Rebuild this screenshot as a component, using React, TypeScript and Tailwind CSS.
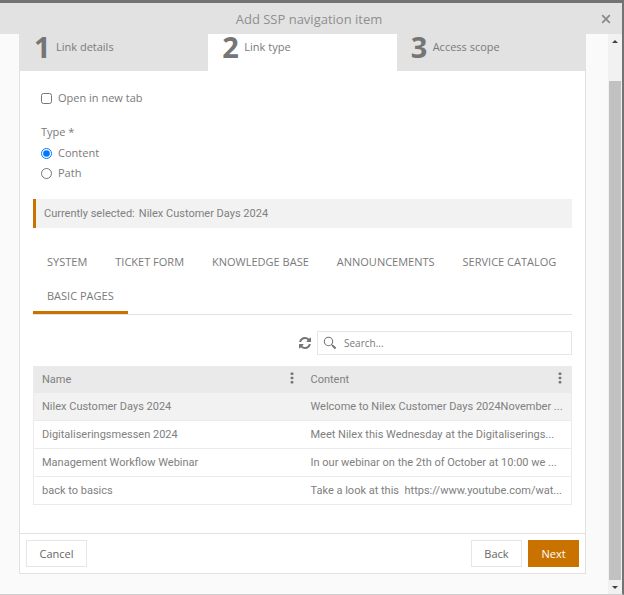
import { useState } from "react";

const steps = ["Link details", "Link type", "Access scope"];

const tabs = [
  "System",
  "Ticket form",
  "Knowledge base",
  "Announcements",
  "Service catalog",
  "Basic pages",
];

const pages = [
  {
    name: "Nilex Customer Days 2024",
    content: "Welcome to Nilex Customer Days 2024November ...",
  },
  {
    name: "Digitaliseringsmessen 2024",
    content: "Meet Nilex this Wednesday at the Digitaliserings...",
  },
  {
    name: "Management Workflow Webinar",
    content: "In our webinar on the 2th of October at 10:00 we ...",
  },
  {
    name: "back to basics",
    content: "Take a look at this \u00a0https://www.youtube.com/wat...",
  },
];

function RefreshIcon() {
  return (
    <svg viewBox="0 0 1536 1536" className="w-3 h-3" fill="currentColor" aria-hidden="true">
      <path d="M1511 928q0 5-1 7-64 268-268 434.5t-478 166.5q-146 0-282.5-55t-243.5-157l-129 129q-19 19-45 19t-45-19-19-45v-448q0-26 19-45t45-19h448q26 0 45 19t19 45-19 45l-137 137q71 66 161 102t187 36q134 0 250-65t186-179q11-17 53-117 8-23 30-23h192q13 0 22.5 9.5t9.5 22.5zm25-800v448q0 26-19 45t-45 19h-448q-26 0-45-19t-19-45 19-45l138-138q-148-137-349-137-134 0-250 65t-186 179q-11 17-53 117-8 23-30 23h-199q-13 0-22.5-9.5t-9.5-22.5v-7q65-268 270-434.5t480-166.5q146 0 284 55.5t245 156.5l130-129q19-19 45-19t45 19 19 45z" />
    </svg>
  );
}

function SearchIcon() {
  return (
    <svg viewBox="0 0 14 14" className="w-[14px] h-[14px] shrink-0" fill="none" stroke="#757575" aria-hidden="true">
      <circle cx="5.5" cy="5.5" r="4.2" strokeWidth="1.1" />
      <path d="M8.6 8.6 10 10" strokeWidth="1.1" />
      <path d="M9.7 9.7 12.6 12.4" strokeWidth="2" />
    </svg>
  );
}

function CloseIcon() {
  return (
    <svg viewBox="0 0 10 10" className="w-[10px] h-[10px]" fill="none" stroke="currentColor" strokeWidth="1.8" aria-hidden="true">
      <path d="M1.2 1.2 8.8 8.8M8.8 1.2 1.2 8.8" />
    </svg>
  );
}

function MoreIcon() {
  return (
    <svg viewBox="0 0 4 12" className="w-1 h-3" fill="currentColor" aria-hidden="true">
      <rect x="0.6" y="0.4" width="2.8" height="2.6" rx="0.8" />
      <rect x="0.6" y="4.7" width="2.8" height="2.6" rx="0.8" />
      <rect x="0.6" y="9" width="2.8" height="2.6" rx="0.8" />
    </svg>
  );
}

function ColumnHeader({ label }: { label: string }) {
  return (
    <th scope="col" className="h-[26px] pr-[9px] pl-2 font-normal">
      <div className="flex items-center justify-between">
        <span>{label}</span>
        <button type="button" aria-label={`${label} column menu`} className="pb-1 text-[#757575]">
          <MoreIcon />
        </button>
      </div>
    </th>
  );
}

// Scroll gutter on the right side of the dialog
function ScrollTrack() {
  return (
    <div className="flex w-[14px] shrink-0 flex-col items-center bg-[#f1f1f1]" aria-hidden="true">
      <div className="flex h-[47px] w-full justify-center pt-[6px]">
        <svg viewBox="0 0 6 3" className="h-[3px] w-[6px]" fill="#404040">
          <path d="M0 3 3 0 6 3z" />
        </svg>
      </div>
      <div className="w-3 flex-1 bg-[#c1c1c1]" />
      <div className="flex h-[14px] items-center">
        <svg viewBox="0 0 6 3" className="h-[3px] w-[6px]" fill="#404040">
          <path d="M0 0 3 3 6 0z" />
        </svg>
      </div>
    </div>
  );
}

export default function App() {
  const [openInNewTab, setOpenInNewTab] = useState(false);
  const [type, setType] = useState("content");
  const [activeTab, setActiveTab] = useState("Basic pages");
  const [selected, setSelected] = useState(0);
  const [query, setQuery] = useState("");

  return (
    <div className="flex min-h-screen flex-col border-t-[3px] border-r-2 border-b border-t-[#737373] border-r-[#737373] border-b-[#cfcfcf] bg-[#fafafa] font-['Open_Sans','Noto_Sans',sans-serif] text-[11px] leading-4 text-[#7a7a7a]">
      <header className="flex h-[31px] items-center bg-[#e2e2e2] px-[11px]">
        <h1 className="flex-1 pl-[6px] text-center text-[13px] text-[#8f8f8f]">Add SSP navigation item</h1>
        <button type="button" aria-label="Close" className="text-[#8a8a8a]">
          <CloseIcon />
        </button>
      </header>

      <div className="flex flex-1">
        <main className="min-w-0 flex-1 pr-[22px] pb-5 pl-[19px]">
          <div className="flex h-full flex-col border border-t-0 border-[#e1e1e1] bg-white">
            <ol className="grid grid-cols-3">
              {steps.map((step, i) => (
                <li
                  key={step}
                  className={`flex h-[37px] items-start gap-[6px] pl-[14px] ${i === 1 ? "bg-white" : "bg-[#e2e2e2]"}`}
                >
                  <span className="w-4 text-center text-[29px] leading-[26px] font-bold text-[#757575]">{i + 1}</span>
                  <span className="pt-[5px]">{step}</span>
                </li>
              ))}
            </ol>

            <div className="flex-1 px-[13px] pt-[19px]">
              <div className="px-2">
                <label className="flex items-center gap-[6px]">
                  <input
                    type="checkbox"
                    className="h-[11px] w-[11px]"
                    checked={openInNewTab}
                    onChange={(e) => setOpenInNewTab(e.target.checked)}
                  />
                  Open in new tab
                </label>

                <fieldset className="mt-[18px]">
                  <legend className="mb-[3px]">Type *</legend>
                  {["Content", "Path"].map((option) => (
                    <label key={option} className="flex h-5 items-center gap-[6px]">
                      <input
                        type="radio"
                        name="type"
                        className="h-[11px] w-[11px]"
                        checked={type === option.toLowerCase()}
                        onChange={() => setType(option.toLowerCase())}
                      />
                      {option}
                    </label>
                  ))}
                </fieldset>
              </div>

              <p className="mt-4 flex h-[29px] items-center gap-1 border-l-[3px] border-[#c97200] bg-[#f2f2f2] px-2 font-['Roboto','Noto_Sans',sans-serif] text-[#808080]">
                <span>Currently selected:</span>
                <span>{pages[selected].name}</span>
              </p>

              <div role="tablist" className="mt-[18px] flex flex-wrap border-b border-[#e1e1e1]">
                {tabs.map((tab) => (
                  <button
                    key={tab}
                    type="button"
                    role="tab"
                    aria-selected={tab === activeTab}
                    onClick={() => setActiveTab(tab)}
                    className={`h-[34px] border-b-[3px] px-[14px] uppercase ${
                      tab === activeTab ? "border-[#c97200]" : "border-transparent"
                    }`}
                  >
                    {tab}
                  </button>
                ))}
              </div>

              <div className="mt-4 flex items-center justify-end gap-[6px]">
                <button type="button" aria-label="Refresh" className="text-[#757575]">
                  <RefreshIcon />
                </button>
                <label className="flex h-6 w-[255px] items-center gap-[7px] border border-[#e6e6e6] px-[5px]">
                  <SearchIcon />
                  <input
                    type="text"
                    aria-label="Search"
                    placeholder="Search..."
                    value={query}
                    onChange={(e) => setQuery(e.target.value)}
                    className="min-w-0 flex-1 text-[10px] outline-none placeholder:text-[#7a7a7a]"
                  />
                </label>
              </div>

              <table className="mt-[11px] w-full table-fixed border border-[#ebebeb] text-left font-['Roboto','Noto_Sans',sans-serif] text-[#808080]">
                <thead className="bg-[#eaeaea]">
                  <tr>
                    <ColumnHeader label="Name" />
                    <ColumnHeader label="Content" />
                  </tr>
                </thead>
                <tbody>
                  {pages.map((page, i) => (
                    <tr
                      key={page.name}
                      onClick={() => setSelected(i)}
                      className={`border-b border-[#ebebeb] ${i === selected ? "bg-[#f2f2f2]" : ""}`}
                    >
                      <td className="h-7 truncate pt-px pl-2">{page.name}</td>
                      <td className="h-7 truncate pt-px pl-2">{page.content}</td>
                    </tr>
                  ))}
                </tbody>
              </table>
            </div>

            <footer className="flex gap-[6px] border-t border-[#e1e1e1] p-[6px] text-[#666]">
              <button type="button" className="mr-auto h-[27px] w-[61px] border border-[#e6e6e6] bg-white">
                Cancel
              </button>
              <button type="button" className="h-[27px] w-[51px] border border-[#e6e6e6] bg-white">
                Back
              </button>
              <button type="button" className="h-[27px] w-[51px] bg-[#c97200] text-white">
                Next
              </button>
            </footer>
          </div>
        </main>
        <ScrollTrack />
      </div>
    </div>
  );
}
